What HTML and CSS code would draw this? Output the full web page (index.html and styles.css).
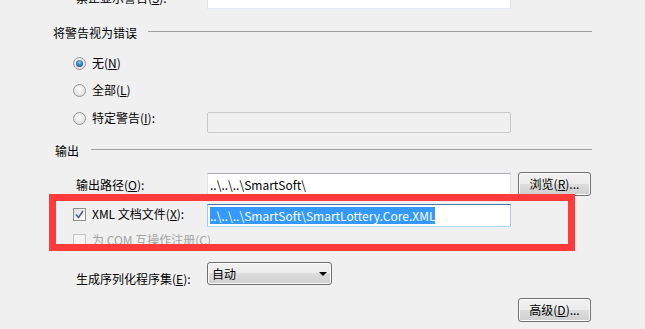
FILE: index.html
```html
<!DOCTYPE html>
<html lang="zh-CN">
<head>
  <meta charset="UTF-8">
  <title>生成</title>
  <link rel="stylesheet" href="styles.css">
</head>
<body>
  <div class="panel">
    <div class="row row-suppress">
      <span class="lead label">禁止显示警告(<u>S</u>):</span>
      <div class="textbox"></div>
    </div>

    <div class="group-head head-warn"><span>将警告视为错误</span><i class="rule"></i></div>

    <div class="row row-none">
      <span class="lead option"><span class="radio checked"></span>无(<u>N</u>)</span>
    </div>
    <div class="row row-all">
      <span class="lead option"><span class="radio"></span>全部(<u>L</u>)</span>
    </div>
    <div class="row row-specific">
      <span class="lead option"><span class="radio"></span>特定警告(<u>I</u>):</span>
      <div class="textbox disabled small"></div>
    </div>

    <div class="group-head head-out"><span>输出</span><i class="rule"></i></div>

    <div class="row row-path">
      <span class="lead label">输出路径(<u>O</u>):</span>
      <div class="textbox offset">..\..\..\SmartSoft\</div>
      <button class="btn">浏览(<u>R</u>)...</button>
    </div>
    <div class="row row-xml">
      <span class="lead option">
        <span class="checkbox">
          <svg width="9" height="9" viewBox="0 0 9 9"><path d="M1 4.5 L3.5 7.5 L8 1" fill="none" stroke="#4a5f86" stroke-width="1.6"/></svg>
        </span>XML 文档文件(<u>X</u>):
      </span>
      <div class="textbox focused"><span class="selected">..\..\..\SmartSoft\SmartLottery.Core.XML</span></div>
    </div>
    <div class="row row-com">
      <span class="lead option muted"><span class="checkbox off"></span>为 COM 互操作注册(<u>C</u>)</span>
    </div>
    <div class="row row-serial">
      <span class="lead label">生成序列化程序集(<u>E</u>):</span>
      <div class="select">自动<span class="arrow"></span></div>
    </div>
    <div class="row row-advanced">
      <button class="btn">高级(<u>D</u>)...</button>
    </div>
  </div>

  <div class="callout"></div>
</body>
</html>
```

FILE: styles.css
```css
body {
  margin: 0;
  background-color: #f0f0f0;
  font-family: "Noto Sans CJK SC", "Open Sans", sans-serif;
  font-size: 12px;
  color: #000;
  overflow: hidden;
}
u {
  text-decoration: underline;
  text-underline-offset: 1px;
}
.panel {
  width: 645px;
}
.row {
  display: flex;
  align-items: flex-start;
}
.lead {
  width: 207px;
  flex-shrink: 0;
  display: flex;
  align-items: center;
  height: 20px;
  line-height: 20px;
  white-space: nowrap;
  box-sizing: border-box;
}
.label {
  padding-left: 76px;
}
.option {
  padding-left: 73px;
}
.muted {
  color: #a3a3a3;
}
.textbox {
  width: 304px;
  height: 23px;
  box-sizing: border-box;
  background-color: #fff;
  border: 1px solid #e2e3ea;
  border-top-color: #abadb3;
  border-bottom-color: #e3e9ef;
  padding-left: 2px;
  line-height: 21px;
  white-space: nowrap;
  overflow: hidden;
}
.textbox.disabled {
  background-color: #f0f0f0;
  border-color: #c8c8c8;
  border-radius: 2px;
}
.textbox.small {
  height: 21px;
  margin-top: 4px;
}
.textbox.offset {
  margin-top: 1px;
}
.textbox.focused {
  border-color: #a4c9e3;
  border-top-color: #3d7bad;
  border-bottom-color: #b7d9ed;
}
.selected {
  display: inline-block;
  background-color: #3399ff;
  color: #fff;
  line-height: 17px;
  margin-top: 2px;
  vertical-align: top;
}
.group-head {
  display: flex;
  align-items: center;
  height: 18px;
  padding-right: 53px;
}
.group-head span {
  white-space: nowrap;
}
.rule {
  flex: 1;
  height: 0;
  border-top: 1px solid #a0a0a0;
  margin-left: 11px;
  margin-top: -2px;
}
.head-warn {
  padding-left: 53px;
  margin-top: 14px;
}
.head-out {
  padding-left: 55px;
  margin-top: 7px;
}
.head-out .rule {
  margin-left: 12px;
}

/* radio + checkbox */
.radio {
  width: 13px;
  height: 13px;
  box-sizing: border-box;
  border-radius: 50%;
  border: 1px solid #959595;
  background: radial-gradient(circle at 50% 40%, #fdfdfd 0%, #e6e6e6 60%, #d2d2d2 100%);
  margin-right: 6px;
  flex-shrink: 0;
  position: relative;
}
.radio.checked::after {
  content: "";
  position: absolute;
  left: 2px;
  top: 2px;
  width: 7px;
  height: 7px;
  border-radius: 50%;
  background: radial-gradient(circle at 50% 35%, #8fc7ef 0%, #2a73b3 55%, #12426f 100%);
}
.checkbox {
  width: 13px;
  height: 13px;
  box-sizing: border-box;
  border: 1px solid #8e8f8f;
  background: linear-gradient(135deg, #dcdcdc 0%, #f6f6f6 70%, #ffffff 100%);
  margin-right: 6px;
  flex-shrink: 0;
  display: flex;
  align-items: center;
  justify-content: center;
}
.checkbox.off {
  border-color: #c4c4c4;
  background: #f4f4f4;
}

/* buttons */
.btn {
  width: 73px;
  height: 24px;
  box-sizing: border-box;
  margin: 0 0 0 7px;
  padding: 0;
  border: 1px solid #707070;
  border-radius: 3px;
  background: linear-gradient(#f2f2f2 0%, #ebebeb 50%, #dddddd 50%, #cfcfcf 100%);
  box-shadow: inset 0 0 0 1px #fbfbfb;
  font-family: inherit;
  font-size: 12px;
  color: #000;
  line-height: 20px;
}
.select {
  width: 125px;
  height: 23px;
  box-sizing: border-box;
  border: 1px solid #707070;
  border-radius: 3px;
  background: linear-gradient(#f2f2f2 0%, #ebebeb 50%, #dddddd 50%, #cfcfcf 100%);
  box-shadow: inset 0 0 0 1px #fbfbfb;
  padding-left: 4px;
  line-height: 20px;
  display: flex;
  align-items: center;
  justify-content: space-between;
  padding-right: 4px;
}
.arrow {
  width: 0;
  height: 0;
  border-left: 4px solid transparent;
  border-right: 4px solid transparent;
  border-top: 4px solid #000;
}

/* vertical rhythm */
.row-suppress {
  margin-top: -14px;
  height: 23px;
}
.row-suppress .lead {
  height: 23px;
}
.row-none {
  margin-top: 12px;
}
.row-all {
  margin-top: 7px;
}
.row-specific {
  margin-top: 8px;
  height: 26px;
}
.row-path {
  margin-top: 13px;
  height: 25px;
}
.row-path .lead {
  height: 25px;
}
.row-xml {
  margin-top: 7px;
  height: 23px;
}
.row-com {
  margin-top: 3px;
}
.row-serial {
  margin-top: 12px;
}
.row-serial .lead {
  margin-top: 7px;
}
.row-advanced {
  margin-top: 9px;
  padding-left: 511px;
}

/* annotation drawn over the form */
.callout {
  position: absolute;
  left: 49px;
  top: 194px;
  width: 526px;
  height: 57px;
  box-sizing: border-box;
  border: 7px solid #fe3a3a;
}
```
